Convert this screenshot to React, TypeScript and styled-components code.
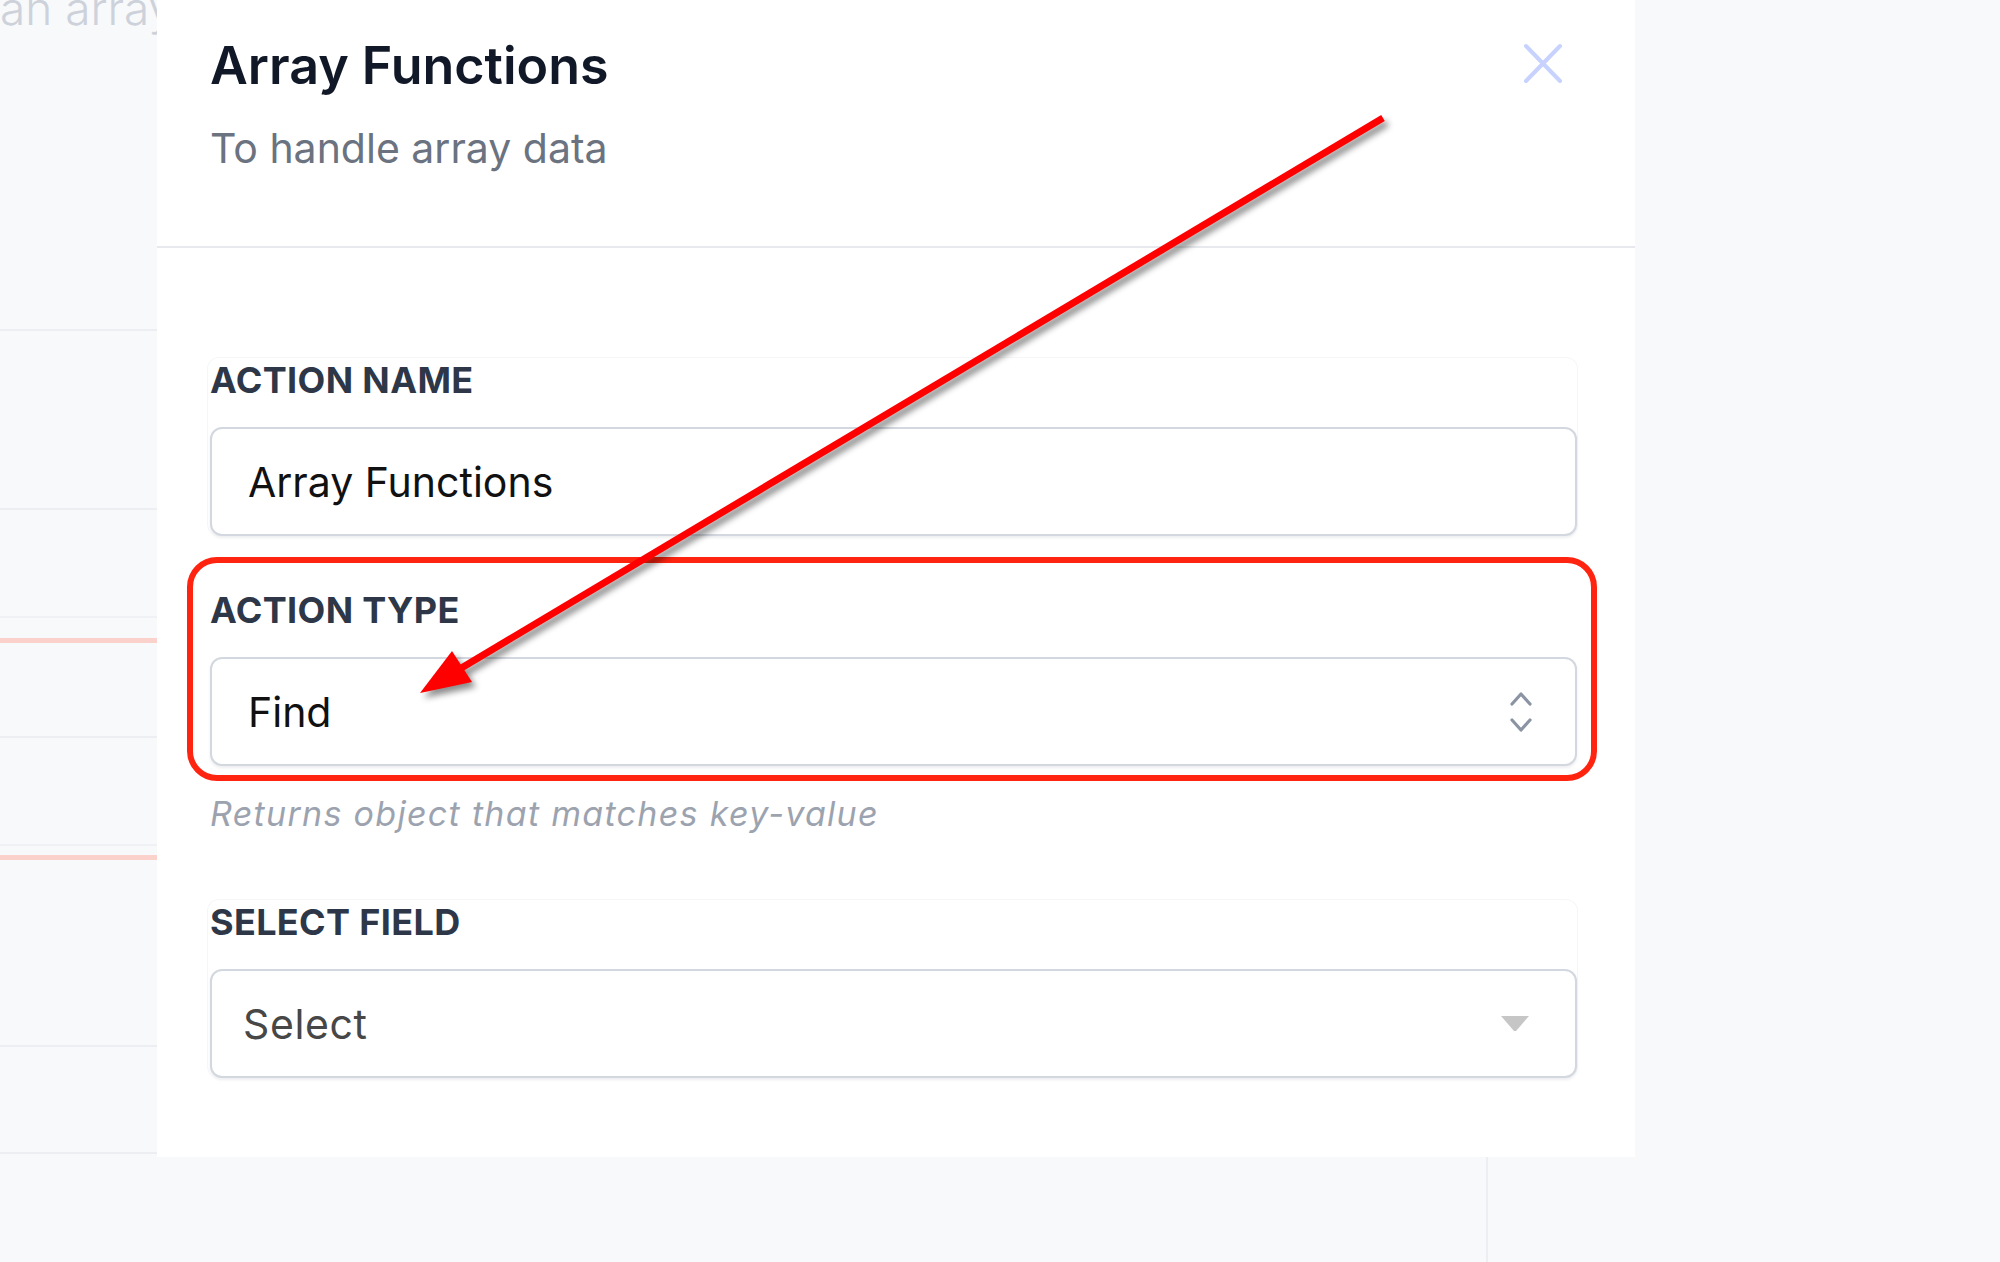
import React from "react";
import styled, { createGlobalStyle } from "styled-components";

//Global
const GlobalStyle = createGlobalStyle`
  html, body {
    margin: 0;
    padding: 0;
    background-color: #f8f9fb;
    overflow: hidden;
  }
  * {
    box-sizing: border-box;
  }
`;

//Page behind the drawer
const StyledPage = styled.div`
  position: relative;
  width: 2000px;
  height: 1262px;
  display: flex;
  background-color: #f8f9fb;
  font-family: Inter, "Noto Sans", "Liberation Sans", sans-serif;
  overflow: hidden;
`;

const StyledList = styled.div`
  width: 1488px;
  height: 100%;
  display: flex;
  flex-direction: column;
  border-right: 2px solid #eceef2;
`;

const StyledRow = styled.div<{ $height: number; $tone: "gray" | "faint" | "salmon" }>`
  height: ${(p) => p.$height}px;
  flex-shrink: 0;
  border-bottom: ${(p) =>
    p.$tone === "salmon"
      ? "5px solid #fad2cb"
      : p.$tone === "faint"
      ? "2px solid #f0f1f4"
      : "2px solid #eceef1"};
  overflow: hidden;
`;

const StyledGhostText = styled.div`
  margin-top: -15px;
  font-size: 46px;
  line-height: 46px;
  font-weight: 300;
  color: #cdd2da;
  white-space: nowrap;
`;

//Drawer
const StyledDrawer = styled.div`
  position: absolute;
  left: 157px;
  top: 0;
  width: 1478px;
  height: 1157px;
  background-color: #ffffff;
  display: flex;
  flex-direction: column;
`;

const StyledHeader = styled.div`
  display: flex;
  justify-content: space-between;
  align-items: flex-start;
  padding: 35px 72px 73px 53px;
  border-bottom: 2px solid #e7e9ee;
`;

const StyledTitle = styled.h1`
  margin: 0;
  font-size: 52px;
  line-height: 62px;
  font-weight: 600;
  color: #111827;
`;

const StyledSubtitle = styled.p`
  margin: 26px 0 0;
  font-size: 41px;
  line-height: 50px;
  font-weight: 400;
  color: #6b7280;
`;

const StyledClose = styled.button`
  margin-top: 8px;
  padding: 0;
  border: none;
  background: none;
  width: 40px;
  height: 41px;
  cursor: pointer;
  display: flex;
`;

const StyledBody = styled.div`
  display: flex;
  flex-direction: column;
  padding: 109px 57px 0 50px;
`;

const StyledGroup = styled.div<{ $top: number; $framed?: boolean }>`
  position: relative;
  margin-top: ${(p) => p.$top}px;
  display: flex;
  flex-direction: column;
  gap: 25px;
  padding: 0 0 0 2px;
  border: 1px solid ${(p) => (p.$framed ? "#f5f6f8" : "transparent")};
  border-bottom: none;
  border-radius: 12px;
`;

const StyledLabel = styled.label`
  font-size: 36px;
  line-height: 44px;
  font-weight: 700;
  letter-spacing: 0.01em;
  color: #2d3748;
`;

const StyledField = styled.div<{ $muted?: boolean }>`
  height: 109px;
  display: flex;
  align-items: center;
  justify-content: space-between;
  padding: ${(p) => (p.$muted ? "0 46px 0 31px" : "0 43px 0 36px")};
  border: 2px solid #d3d7df;
  border-radius: 12px;
  background-color: #ffffff;
  box-shadow: 0 2px 3px rgba(30, 40, 60, 0.08);
  font-size: 41px;
  letter-spacing: ${(p) => (p.$muted ? "0.6px" : "0")};
  color: ${(p) => (p.$muted ? "#474747" : "#111111")};
`;

const StyledHelp = styled.p`
  margin: 28px 0 0;
  padding-left: 3px;
  font-size: 34px;
  line-height: 40px;
  font-style: italic;
  letter-spacing: 1.3px;
  color: #9ca3af;
`;

//Annotations laid over the drawer
const StyledHighlight = styled.span`
  position: absolute;
  top: -31px;
  left: -21px;
  right: -20px;
  bottom: -15px;
  border: 6px solid #ff2410;
  border-radius: 30px;
  pointer-events: none;
`;

const StyledArrow = styled.svg`
  position: absolute;
  left: 0;
  top: 0;
  pointer-events: none;
  filter: drop-shadow(4px 5px 3px rgba(0, 0, 0, 0.45));
`;

const rows: { height: number; tone: "gray" | "faint" | "salmon" }[] = [
  { height: 331, tone: "gray" },
  { height: 179, tone: "gray" },
  { height: 108, tone: "faint" },
  { height: 25, tone: "salmon" },
  { height: 95, tone: "gray" },
  { height: 108, tone: "faint" },
  { height: 14, tone: "salmon" },
  { height: 187, tone: "gray" },
  { height: 107, tone: "gray" },
];

const Chevrons = () => (
  <svg width="22" height="42" viewBox="0 0 22 42" fill="none">
    <path d="M2 13 L11 3 L20 13" stroke="#8b94a3" strokeWidth="3.2" strokeLinecap="round" strokeLinejoin="round" />
    <path d="M2 29 L11 39 L20 29" stroke="#8b94a3" strokeWidth="3.2" strokeLinecap="round" strokeLinejoin="round" />
  </svg>
);

const Caret = () => (
  <svg width="28" height="15" viewBox="0 0 28 15">
    <path d="M0 0 H28 L15 15 H13 Z" fill="#c6c6c6" />
  </svg>
);

const App: React.FC = () => {
  return (
    <>
      <GlobalStyle />
      <StyledPage>
        <StyledList>
          {rows.map((row, i) => (
            <StyledRow key={i} $height={row.height} $tone={row.tone}>
              {i === 0 && <StyledGhostText>an array of values</StyledGhostText>}
            </StyledRow>
          ))}
        </StyledList>

        <StyledDrawer>
          <StyledHeader>
            <div>
              <StyledTitle>Array Functions</StyledTitle>
              <StyledSubtitle>To handle array data</StyledSubtitle>
            </div>
            <StyledClose aria-label="Close">
              <svg width="40" height="41" viewBox="0 0 40 41">
                <path d="M3 3 L37 38 M37 3 L3 38" stroke="#c7d2fe" strokeWidth="4" strokeLinecap="round" />
              </svg>
            </StyledClose>
          </StyledHeader>

          <StyledBody>
            <StyledGroup $top={0} $framed>
              <StyledLabel>ACTION NAME</StyledLabel>
              <StyledField>Array Functions</StyledField>
            </StyledGroup>

            <StyledGroup $top={51}>
              <StyledLabel>ACTION TYPE</StyledLabel>
              <StyledField>
                Find
                <Chevrons />
              </StyledField>
              <StyledHighlight />
            </StyledGroup>
            <StyledHelp>Returns object that matches key-value</StyledHelp>

            <StyledGroup $top={65} $framed>
              <StyledLabel>SELECT FIELD</StyledLabel>
              <StyledField $muted>
                Select
                <Caret />
              </StyledField>
            </StyledGroup>
          </StyledBody>
        </StyledDrawer>

        <StyledArrow width="2000" height="1262" viewBox="0 0 2000 1262">
          <line x1="1383" y1="118" x2="458" y2="670" stroke="#ff0000" strokeWidth="7" />
          <polygon points="420,693 452,651 472,682" fill="#ff0000" />
        </StyledArrow>
      </StyledPage>
    </>
  );
};

export default App;
